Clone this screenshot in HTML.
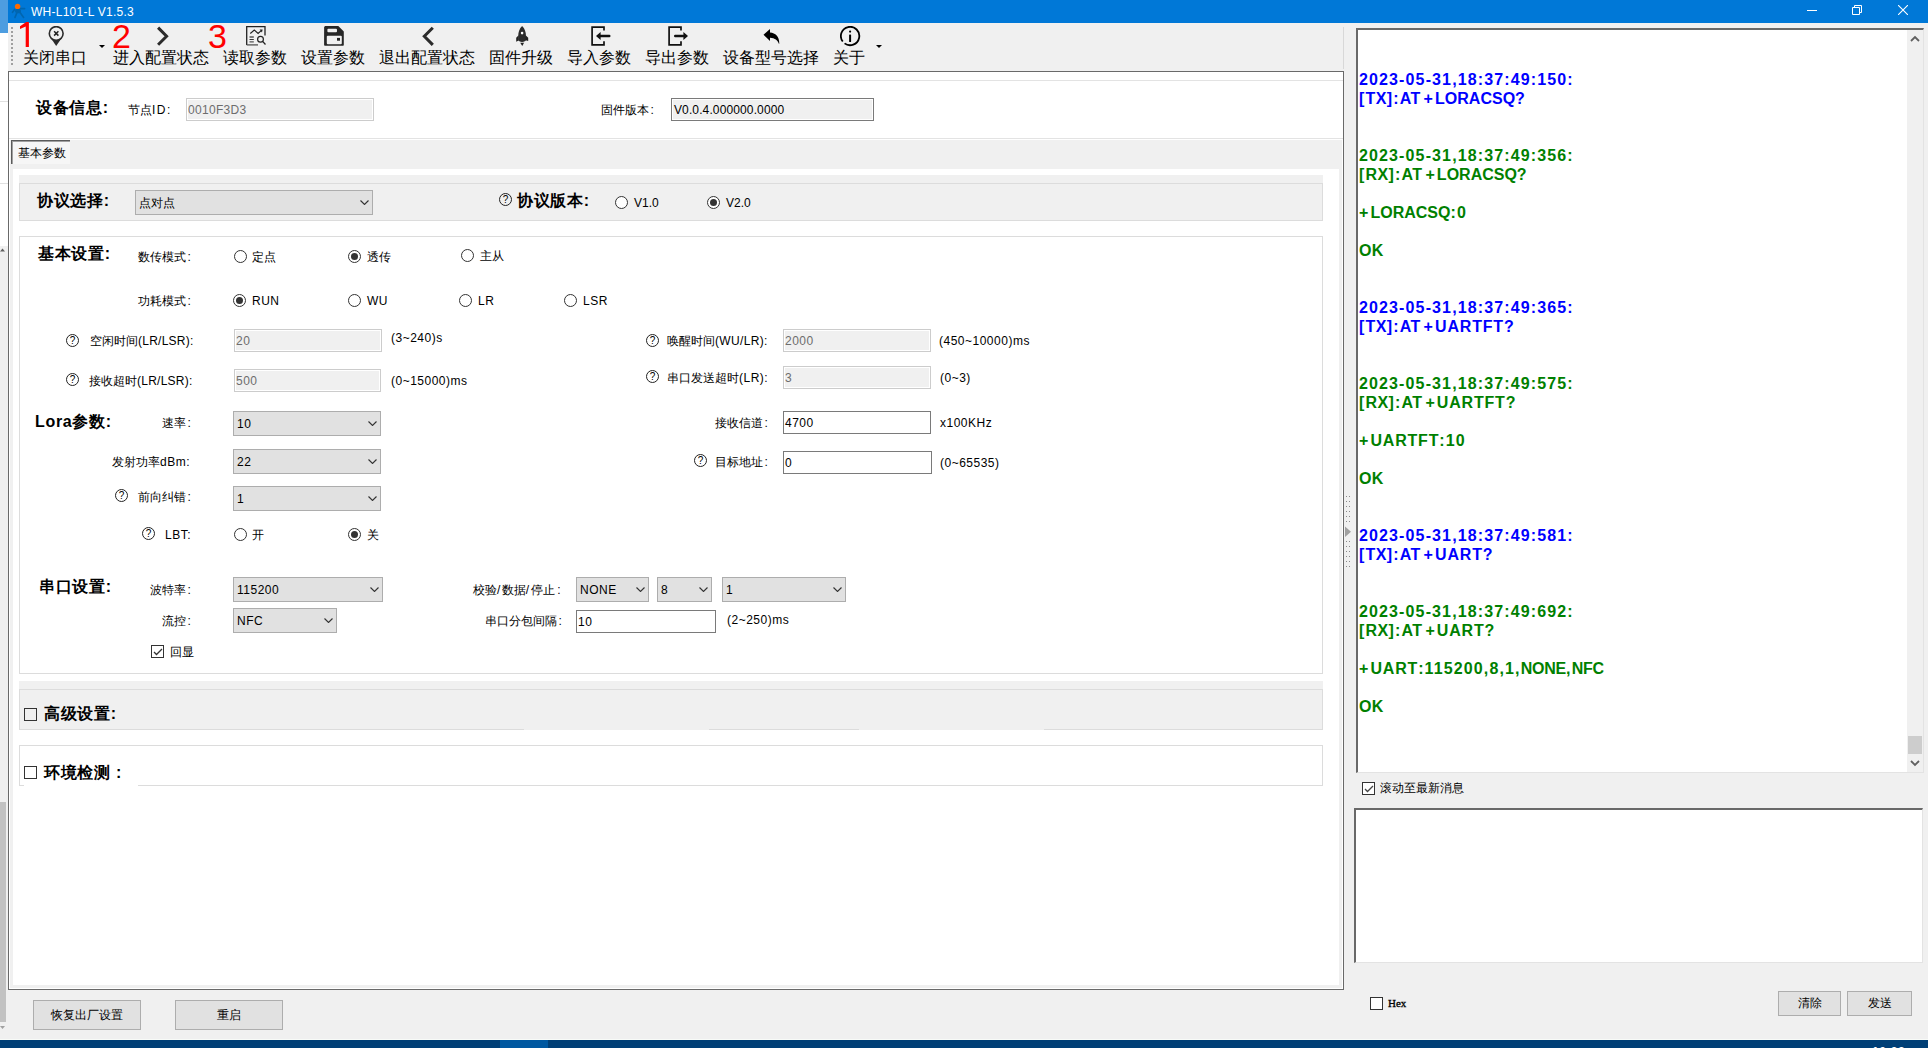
<!DOCTYPE html>
<html><head><meta charset="utf-8">
<style>
*{box-sizing:border-box;margin:0;padding:0}
html,body{width:1928px;height:1048px;overflow:hidden;background:#f0f0f0;font-family:"Liberation Sans",sans-serif;color:#000}
.a{position:absolute}
.t{position:absolute;white-space:nowrap;font-size:12px;line-height:14px}
.tb{position:absolute;white-space:nowrap;font-size:16px;line-height:18px}
.b16{position:absolute;white-space:nowrap;font-size:16px;line-height:18px;font-weight:bold;letter-spacing:.7px}
.rd{position:absolute;width:13px;height:13px;border:1px solid #333;border-radius:50%;background:#fff}
.rd.on::after{content:"";position:absolute;left:2px;top:2px;width:7px;height:7px;border-radius:50%;background:#333}
.q{position:absolute;width:13px;height:13px;border:1px solid #222;border-radius:50%;font-size:10px;line-height:11px;text-align:center;font-weight:normal}
.sel{position:absolute;border:1px solid #adadad;background:#e1e1e1;font-size:12px;line-height:14px}
.sel span{position:absolute;left:3px;top:5px}
.sel svg{position:absolute;right:3px;top:9px}
.inp{position:absolute;border:1px solid #7a7a7a;background:#fff;font-size:12px}
.inp.dis{border-color:#ccc;background:#f0f0f0;color:#6d6d6d;box-shadow:inset 0 0 0 1px #fff}
.inp.ro{border-color:#7a7a7a;background:#f0f0f0;color:#000;box-shadow:inset 0 0 0 1px #fff}
.inp span{position:absolute;left:1px;top:4px;line-height:14px}
.btn{position:absolute;border:1px solid #adadad;background:#e1e1e1;font-size:12px;text-align:center}
.cb{position:absolute;width:13px;height:13px;border:1px solid #333;background:#fff}
.log{position:absolute;left:1359px;font-size:16px;line-height:19px;font-weight:bold;white-space:pre;font-family:"Liberation Sans",sans-serif;letter-spacing:1.13px}
.l{letter-spacing:.5px}.c{margin-left:1.5px}
.lt{letter-spacing:.4px}
.bl{color:#0000ff}.gr{color:#008000}
</style></head><body>
<!-- desktop strip -->
<div class="a" style="left:0;top:0;width:8px;height:33px;background:#4d9de0"></div>
<div class="a" style="left:0;top:33px;width:8px;height:213px;background:#fff"></div>
<div class="a" style="left:0;top:101px;width:8px;height:1px;background:#e0e0e0"></div>
<div class="a" style="left:0;top:183px;width:8px;height:1px;background:#e0e0e0"></div>
<div class="a" style="left:0;top:246px;width:8px;height:794px;background:#f0f0f0"></div>
<div class="a" style="left:0;top:802px;width:6px;height:220px;background:#c2c2c2"></div>

<svg class="a" style="left:0;top:247px" width="5" height="5"><path d="M0 4.5L2.5 1.5L5 4.5z" fill="#606060"/></svg>
<svg class="a" style="left:0;top:1025px" width="5" height="5"><path d="M0 1L2.5 4L5 1z" fill="#a0a0a0"/></svg>
<!-- title bar -->
<div class="a" style="left:8px;top:0;width:1920px;height:23px;background:#0078d7"></div>
<svg class="a" style="left:0;top:0" width="30" height="22" viewBox="0 0 30 22"><path d="M14.6 9.4L12.5 12.3M19.5 8.6H24.6M17.8 10.5L15 17.4M18.6 10.5L23.6 17.4" stroke="#0066b0" stroke-width="1.7" stroke-linecap="round" fill="none"/><ellipse cx="18" cy="11" rx="3" ry="2.3" fill="#0066b0"/><circle cx="17.6" cy="6.4" r="2.7" fill="#ff6a00"/></svg>
<div class="t" style="left:31px;top:5px;color:#fff;font-size:12px;letter-spacing:.25px">WH-L101-L V1.5.3</div>
<div class="a" style="left:1807px;top:10px;width:10px;height:1px;background:#fff"></div>
<svg class="a" style="left:1852px;top:5px" width="10" height="10" viewBox="0 0 10 10"><path d="M0.5 2.5h7v7h-7z M2.5 2.5v-2h7v7h-2" stroke="#fff" fill="none"/></svg>
<svg class="a" style="left:1898px;top:5px" width="10" height="10" viewBox="0 0 10 10"><path d="M0 0L10 10M10 0L0 10" stroke="#fff" stroke-width="1.1" fill="none"/></svg>


<!-- toolbar -->
<div class="a" style="left:1343px;top:27px;width:1px;height:42px;background:#d8d8d8"></div>
<svg class="a" style="left:11px;top:27px" width="3" height="40" viewBox="0 0 3 40">
<g fill="#a0a0a0"><rect x="0" y="0" width="2" height="2"/><rect x="0" y="4" width="2" height="2"/><rect x="0" y="8" width="2" height="2"/><rect x="0" y="12" width="2" height="2"/><rect x="0" y="16" width="2" height="2"/><rect x="0" y="20" width="2" height="2"/><rect x="0" y="24" width="2" height="2"/><rect x="0" y="28" width="2" height="2"/><rect x="0" y="32" width="2" height="2"/><rect x="0" y="36" width="2" height="2"/></g></svg>
<svg class="a" style="left:0;top:0" width="40" height="50"><path d="M28.9 22.1V46.9H25.7V26.6L20 29.1V26.2L26.3 22.1Z" fill="#ff0000"/></svg>
<div class="a" style="left:112px;top:17px;font-size:34px;line-height:38px;color:#ff0000">2</div>
<div class="a" style="left:208px;top:17px;font-size:34px;line-height:38px;color:#ff0000">3</div>
<div class="tb" style="left:23px;top:49px">关闭串口</div>
<div class="tb" style="left:113px;top:49px">进入配置状态</div>
<div class="tb" style="left:223px;top:49px">读取参数</div>
<div class="tb" style="left:301px;top:49px">设置参数</div>
<div class="tb" style="left:379px;top:49px">退出配置状态</div>
<div class="tb" style="left:489px;top:49px">固件升级</div>
<div class="tb" style="left:567px;top:49px">导入参数</div>
<div class="tb" style="left:645px;top:49px">导出参数</div>
<div class="tb" style="left:723px;top:49px">设备型号选择</div>
<div class="tb" style="left:833px;top:49px">关于</div>
<svg class="a" style="left:99px;top:45px" width="6" height="4"><path d="M0 0h6l-3 3z" fill="#000"/></svg>
<svg class="a" style="left:876px;top:45px" width="6" height="4"><path d="M0 0h6l-3 3z" fill="#000"/></svg>
<!-- icon 1 pin x -->
<svg class="a" style="left:48px;top:26px" width="17" height="21" viewBox="0 0 17 21"><path d="M1.9 10.8L8.2 19.9L14.5 10.8Z" fill="#2b2b2b"/><circle cx="8.2" cy="7.5" r="6.9" fill="#f0f0f0" stroke="#2b2b2b" stroke-width="1.6"/><path d="M6.1 5.3l4.3 4.3M10.4 5.3l-4.3 4.3" stroke="#222" stroke-width="1.5"/></svg>
<!-- icon 2 > -->
<svg class="a" style="left:150px;top:22px" width="30" height="28" viewBox="0 0 30 28"><path d="M8.1 5.6L16.6 14.2L8.1 22.8" fill="none" stroke="#2b2b2b" stroke-width="3"/></svg>
<!-- icon 3 read -->
<svg class="a" style="left:240px;top:22px" width="30" height="28" viewBox="0 0 30 28"><path d="M6.7 22.9V4.6H25V13.4" fill="none" stroke="#222" stroke-width="1.3"/><path d="M6.7 22.9H18" stroke="#555" stroke-width="1.3"/><path d="M10.3 11.5L14.3 8.1L18.1 11.5L21.5 8.4" fill="none" stroke="#222" stroke-width="1.1"/><path d="M19.6 7.6H22.6L22 10.4Z" fill="#222"/><path d="M9.5 15H13.8M9.5 19.8H13.8" stroke="#555" stroke-width="1.3"/><path d="M9.5 17.5H13.8" stroke="#222" stroke-width="0.9"/><circle cx="20.5" cy="17.3" r="2.9" fill="none" stroke="#222" stroke-width="1.2"/><path d="M22.6 19.4L25.5 22.5" stroke="#222" stroke-width="1.3"/></svg>
<!-- icon 4 save -->
<svg class="a" style="left:318px;top:22px" width="30" height="28" viewBox="0 0 30 28"><path d="M7.2 4H20.3L25.8 9.5V22.9Q25.8 23.7 25 23.7H6.9Q6.1 23.7 6.1 22.9V5.1Z" fill="#262626"/><rect x="9.4" y="6.8" width="9.6" height="3.4" rx="1" fill="#f0f0f0"/><rect x="8.8" y="13.8" width="15" height="8.4" rx="1" fill="#f0f0f0"/><rect x="19" y="15.9" width="3" height="2.8" fill="#222"/></svg>
<!-- icon 5 < -->
<svg class="a" style="left:415px;top:22px" width="30" height="28" viewBox="0 0 30 28"><path d="M17.8 5.7L9.3 14.3L17.8 22.9" fill="none" stroke="#2b2b2b" stroke-width="3"/></svg>
<!-- icon 6 rocket -->
<svg class="a" style="left:505px;top:22px" width="30" height="28" viewBox="0 0 30 28"><path d="M17.1 4C14.5 6.5 13.2 10 13.2 14.5V17.8C13.2 19.2 15 19.9 17.1 19.9C19.2 19.9 21 19.2 21 17.8V14.5C21 10 19.7 6.5 17.1 4Z" fill="#2b2b2b"/><path d="M13.6 13.2L11.2 15.8V19.8L13.6 18.6ZM20.6 13.2L23.2 15.8V19L20.6 18.3Z" fill="#222"/><circle cx="17.1" cy="11.1" r="1.3" fill="#fff"/><path d="M15.2 20.8H19.1L17.3 24.1Z" fill="#222"/></svg>
<!-- icon 7 import -->
<svg class="a" style="left:591px;top:26px" width="20" height="21" viewBox="0 0 20 21"><path d="M13 4.6V1.1H1.1v17.7H13V15.2" fill="none" stroke="#111" stroke-width="1.7"/><path d="M18.3 10H8" stroke="#111" stroke-width="2.4" stroke-linecap="round"/><path d="M5 10l4.6-4v8z" fill="#111"/></svg>
<!-- icon 8 export -->
<svg class="a" style="left:668px;top:26px" width="21" height="21" viewBox="0 0 21 21"><path d="M13 4.6V1.1H1.1v17.7H13V15.2" fill="none" stroke="#111" stroke-width="1.7"/><path d="M7.2 10H15" stroke="#111" stroke-width="2.4" stroke-linecap="round"/><path d="M20 10l-4.6-4v8z" fill="#111"/></svg>
<!-- icon 9 reply -->
<svg class="a" style="left:763px;top:28px" width="18" height="18" viewBox="0 0 18 18"><path d="M0.5 6.8L7 1V4.6C12.5 5 16.3 8.5 16.3 15.5L16 16C14.8 12.3 12 10.2 7 9.8V12.9z" fill="#000"/></svg>
<!-- icon 10 info -->
<svg class="a" style="left:840px;top:26px" width="21" height="21" viewBox="0 0 21 21"><path d="M2.75 15.54A9.2 9.2 0 1 1 4.56 17.35" fill="none" stroke="#000" stroke-width="1.8"/><rect x="9.1" y="8.4" width="2" height="7.6" rx="0.6" fill="#000"/><circle cx="10.1" cy="5.6" r="1.1" fill="#000"/></svg>

<!-- left content panel -->
<div class="a" style="left:8px;top:71px;width:1336px;height:919px;border:1px solid #696969;background:#fff"></div>

<div class="a" style="left:9px;top:80px;width:1334px;height:1px;background:#e3e3e3"></div>
<div class="b16" style="left:36px;top:99px">设备信息:</div>
<div class="t" style="left:128px;top:103px;">节点<span class="l" style="letter-spacing:1.5px">ID:</span></div>
<div class="inp dis" style="left:186px;top:98px;width:188px;height:23px"><span class="l" style="letter-spacing:.3px">0010F3D3</span></div>
<div class="t" style="left:601px;top:103px;">固件版本<span class="c">:</span></div>
<div class="inp ro" style="left:671px;top:98px;width:203px;height:23px"><span class="l" style="letter-spacing:.12px;left:2px">V0.0.4.000000.0000</span></div>
<div class="a" style="left:9px;top:138px;width:1334px;height:1px;background:#e3e3e3"></div>
<div class="a" style="left:10px;top:140px;width:1332px;height:29px;background:#f0f0f0"></div>
<div class="a" style="left:11px;top:140px;width:59px;height:24px;border-top:1px solid #5a5a5a;border-left:1px solid #5a5a5a;background:#f6f6f6;box-shadow:inset 1px 1px 0 #a0a0a0"></div>
<div class="t" style="left:18px;top:146px;">基本参数</div>
<div class="a" style="left:10px;top:168px;width:3px;height:820px;background:#f0f0f0"></div>
<div class="a" style="left:1339px;top:168px;width:3px;height:820px;background:#f0f0f0"></div>
<div class="a" style="left:10px;top:985px;width:1332px;height:3px;background:#f0f0f0"></div>
<div class="a" style="left:19px;top:175px;width:1304px;height:46px;background:#f0f0f0"></div>
<div class="a" style="left:19px;top:183px;width:1304px;height:38px;border:1px solid #dcdcdc;border-right:1px solid #dcdcdc"></div>
<div class="b16" style="left:37px;top:192px">协议选择:</div>
<div class="sel" style="left:135px;top:190px;width:238px;height:25px"><span>点对点</span><svg width="9" height="5" viewBox="0 0 9 5"><path d="M0.5 0.5l4 4 4-4" fill="none" stroke="#333" stroke-width="1.1"/></svg></div>
<div class="q" style="left:499px;top:193px">?</div>
<div class="b16" style="left:517px;top:192px">协议版本:</div>
<div class="rd" style="left:615px;top:196px"></div>
<div class="t" style="left:634px;top:196px;"><span>V1.0</span></div>
<div class="rd on" style="left:707px;top:196px"></div>
<div class="t" style="left:726px;top:196px;"><span>V2.0</span></div>
<div class="a" style="left:19px;top:236px;width:1304px;height:438px;border:1px solid #dcdcdc"></div>
<div class="b16" style="left:38px;top:245px">基本设置:</div>
<div class="t" style="left:138px;top:250px;">数传模式<span class="c">:</span></div>
<div class="rd" style="left:234px;top:250px"></div>
<div class="t" style="left:252px;top:250px;">定点</div>
<div class="rd on" style="left:348px;top:250px"></div>
<div class="t" style="left:367px;top:250px;">透传</div>
<div class="rd" style="left:461px;top:249px"></div>
<div class="t" style="left:480px;top:249px;">主从</div>
<div class="t" style="left:138px;top:294px;">功耗模式<span class="c">:</span></div>
<div class="rd on" style="left:233px;top:294px"></div>
<div class="t" style="left:252px;top:294px;"><span class="l">RUN</span></div>
<div class="rd" style="left:348px;top:294px"></div>
<div class="t" style="left:367px;top:294px;"><span class="l">WU</span></div>
<div class="rd" style="left:459px;top:294px"></div>
<div class="t" style="left:478px;top:294px;"><span class="l">LR</span></div>
<div class="rd" style="left:564px;top:294px"></div>
<div class="t" style="left:583px;top:294px;"><span class="l">LSR</span></div>
<div class="q" style="left:66px;top:334px">?</div>
<div class="t" style="left:90px;top:334px;">空闲时间<span class="l" style="letter-spacing:.25px">(LR/LSR):</span></div>
<div class="inp dis" style="left:234px;top:329px;width:148px;height:23px"><span class="l">20</span></div>
<div class="t" style="left:391px;top:331px;"><span class="l">(3~240)s</span></div>
<div class="q" style="left:646px;top:334px">?</div>
<div class="t" style="left:667px;top:334px;">唤醒时间<span class="l" style="letter-spacing:.35px">(WU/LR):</span></div>
<div class="inp dis" style="left:783px;top:329px;width:148px;height:23px"><span class="l">2000</span></div>
<div class="t" style="left:939px;top:334px;"><span class="l">(450~10000)ms</span></div>
<div class="q" style="left:66px;top:373px">?</div>
<div class="t" style="left:89px;top:374px;">接收超时<span class="l" style="letter-spacing:.25px">(LR/LSR):</span></div>
<div class="inp dis" style="left:234px;top:369px;width:147px;height:23px"><span class="l">500</span></div>
<div class="t" style="left:391px;top:374px;"><span class="l">(0~15000)ms</span></div>
<div class="q" style="left:646px;top:370px">?</div>
<div class="t" style="left:667px;top:371px;">串口发送超时<span class="l">(LR):</span></div>
<div class="inp dis" style="left:783px;top:366px;width:148px;height:23px"><span class="l">3</span></div>
<div class="t" style="left:940px;top:371px;"><span class="l">(0~3)</span></div>
<div class="b16" style="left:35px;top:413px">Lora参数:</div>
<div class="t" style="left:162px;top:416px;">速率<span class="c">:</span></div>
<div class="sel" style="left:233px;top:411px;width:148px;height:25px"><span class="l">10</span><svg width="9" height="5" viewBox="0 0 9 5"><path d="M0.5 0.5l4 4 4-4" fill="none" stroke="#333" stroke-width="1.1"/></svg></div>
<div class="t" style="left:715px;top:416px;">接收信道<span class="c">:</span></div>
<div class="inp" style="left:783px;top:411px;width:148px;height:23px"><span class="l">4700</span></div>
<div class="t" style="left:940px;top:416px;"><span class="l">x100KHz</span></div>
<div class="t" style="left:112px;top:455px;">发射功率<span class="l">dBm:</span></div>
<div class="sel" style="left:233px;top:449px;width:148px;height:25px"><span class="l">22</span><svg width="9" height="5" viewBox="0 0 9 5"><path d="M0.5 0.5l4 4 4-4" fill="none" stroke="#333" stroke-width="1.1"/></svg></div>
<div class="q" style="left:694px;top:454px">?</div>
<div class="t" style="left:715px;top:455px;">目标地址<span class="c">:</span></div>
<div class="inp" style="left:783px;top:451px;width:149px;height:23px"><span class="l">0</span></div>
<div class="t" style="left:940px;top:456px;"><span class="l">(0~65535)</span></div>
<div class="q" style="left:115px;top:489px">?</div>
<div class="t" style="left:138px;top:490px;">前向纠错<span class="c">:</span></div>
<div class="sel" style="left:233px;top:486px;width:148px;height:25px"><span class="l">1</span><svg width="9" height="5" viewBox="0 0 9 5"><path d="M0.5 0.5l4 4 4-4" fill="none" stroke="#333" stroke-width="1.1"/></svg></div>
<div class="q" style="left:142px;top:527px">?</div>
<div class="t" style="left:165px;top:528px;"><span class="l">LBT:</span></div>
<div class="rd" style="left:234px;top:528px"></div>
<div class="t" style="left:252px;top:528px;">开</div>
<div class="rd on" style="left:348px;top:528px"></div>
<div class="t" style="left:367px;top:528px;">关</div>
<div class="b16" style="left:39px;top:578px">串口设置:</div>
<div class="t" style="left:150px;top:583px;">波特率<span class="c">:</span></div>
<div class="sel" style="left:233px;top:577px;width:150px;height:25px"><span class="l">115200</span><svg width="9" height="5" viewBox="0 0 9 5"><path d="M0.5 0.5l4 4 4-4" fill="none" stroke="#333" stroke-width="1.1"/></svg></div>
<div class="t" style="left:473px;top:583px;">校验<span class="l" style="letter-spacing:1.5px">/</span>数据<span class="l" style="letter-spacing:1.5px">/</span>停止<span class="c" style="margin-left:2.5px">:</span></div>
<div class="sel" style="left:576px;top:577px;width:73px;height:25px"><span class="l">NONE</span><svg width="9" height="5" viewBox="0 0 9 5"><path d="M0.5 0.5l4 4 4-4" fill="none" stroke="#333" stroke-width="1.1"/></svg></div>
<div class="sel" style="left:657px;top:577px;width:55px;height:25px"><span class="l">8</span><svg width="9" height="5" viewBox="0 0 9 5"><path d="M0.5 0.5l4 4 4-4" fill="none" stroke="#333" stroke-width="1.1"/></svg></div>
<div class="sel" style="left:722px;top:577px;width:124px;height:25px"><span class="l">1</span><svg width="9" height="5" viewBox="0 0 9 5"><path d="M0.5 0.5l4 4 4-4" fill="none" stroke="#333" stroke-width="1.1"/></svg></div>
<div class="t" style="left:162px;top:614px;">流控<span class="c">:</span></div>
<div class="sel" style="left:233px;top:608px;width:104px;height:25px"><span class="l">NFC</span><svg width="9" height="5" viewBox="0 0 9 5"><path d="M0.5 0.5l4 4 4-4" fill="none" stroke="#333" stroke-width="1.1"/></svg></div>
<div class="t" style="left:485px;top:614px;">串口分包间隔<span class="c">:</span></div>
<div class="inp" style="left:576px;top:610px;width:140px;height:23px"><span class="l">10</span></div>
<div class="t" style="left:727px;top:613px;"><span class="l">(2~250)ms</span></div>
<div class="cb" style="left:151px;top:645px"></div>
<svg class="a" style="left:153px;top:648px" width="10" height="8"><path d="M1 4l2.5 2.5L9 1" fill="none" stroke="#333" stroke-width="1.3"/></svg>
<div class="t" style="left:170px;top:645px;">回显</div>
<div class="a" style="left:19px;top:681px;width:1304px;height:49px;background:#f0f0f0"></div>
<div class="a" style="left:19px;top:689px;width:1304px;height:41px;border:1px solid #dcdcdc"></div>
<div class="a" style="left:24px;top:708px;width:13px;height:13px;border:1px solid #333;background:transparent"></div>
<div class="b16" style="left:44px;top:705px">高级设置:</div>
<div class="a" style="left:524px;top:729px;width:185px;height:1px;background:#f0f0f0"></div>
<div class="a" style="left:859px;top:729px;width:185px;height:1px;background:#f0f0f0"></div>
<div class="a" style="left:19px;top:745px;width:1304px;height:41px;border:1px solid #dcdcdc"></div>
<div class="a" style="left:24px;top:785px;width:114px;height:1px;background:#fff"></div>
<div class="a" style="left:24px;top:766px;width:13px;height:13px;border:1px solid #333;background:#fff"></div>
<div class="b16" style="left:44px;top:764px">环境检测 :</div>
<div class="btn" style="left:33px;top:1000px;width:108px;height:30px;line-height:28px">恢复出厂设置</div>
<div class="btn" style="left:175px;top:1000px;width:108px;height:30px;line-height:28px">重启</div>
<!-- right panel -->
<div class="a" style="left:1356px;top:28px;width:568px;height:745px;border-top:2px solid #696969;border-left:2px solid #696969;border-right:1px solid #e3e3e3;border-bottom:1px solid #e3e3e3;background:#fff"></div>
<div class="a" style="left:1354px;top:808px;width:569px;height:155px;border-top:2px solid #696969;border-left:2px solid #696969;border-right:1px solid #e3e3e3;border-bottom:1px solid #e3e3e3;background:#fff"></div>

<div class="log bl" style="top:70px">2023-05-31,18:37:49:150:</div>
<div class="log bl" style="top:89px">[<span class="lt">TX</span>]:<span class="lt">AT</span><span style="margin-left:3px;margin-right:1px">+</span><span class="lt" style="letter-spacing:0">LORACSQ</span>?</div>
<div class="log gr" style="top:146px">2023-05-31,18:37:49:356:</div>
<div class="log gr" style="top:165px">[<span class="lt">RX</span>]:<span class="lt">AT</span><span style="margin-left:3px;margin-right:1px">+</span><span class="lt" style="letter-spacing:0">LORACSQ</span>?</div>
<div class="log gr" style="top:203px"><span style="margin-right:1px">+</span><span class="lt" style="letter-spacing:0">LORACSQ</span>:0</div>
<div class="log gr" style="top:241px"><span class="lt">OK</span></div>
<div class="log bl" style="top:298px">2023-05-31,18:37:49:365:</div>
<div class="log bl" style="top:317px">[<span class="lt">TX</span>]:<span class="lt">AT</span><span style="margin-left:3px;margin-right:1px">+</span><span class="lt" style="letter-spacing:.8px">UARTFT</span>?</div>
<div class="log gr" style="top:374px">2023-05-31,18:37:49:575:</div>
<div class="log gr" style="top:393px">[<span class="lt">RX</span>]:<span class="lt">AT</span><span style="margin-left:3px;margin-right:1px">+</span><span class="lt" style="letter-spacing:.8px">UARTFT</span>?</div>
<div class="log gr" style="top:431px"><span style="margin-right:1px">+</span><span class="lt" style="letter-spacing:.8px">UARTFT</span>:10</div>
<div class="log gr" style="top:469px"><span class="lt">OK</span></div>
<div class="log bl" style="top:526px">2023-05-31,18:37:49:581:</div>
<div class="log bl" style="top:545px">[<span class="lt">TX</span>]:<span class="lt">AT</span><span style="margin-left:3px;margin-right:1px">+</span><span class="lt" style="letter-spacing:.8px">UART</span>?</div>
<div class="log gr" style="top:602px">2023-05-31,18:37:49:692:</div>
<div class="log gr" style="top:621px">[<span class="lt">RX</span>]:<span class="lt">AT</span><span style="margin-left:3px;margin-right:1px">+</span><span class="lt" style="letter-spacing:.8px">UART</span>?</div>
<div class="log gr" style="top:659px"><span style="margin-right:1px">+</span><span class="lt" style="letter-spacing:.8px">UART</span>:115200,8,1,<span class="lt" style="letter-spacing:-.2px">NONE</span>,<span class="lt" style="letter-spacing:-.2px">NFC</span></div>
<div class="log gr" style="top:697px"><span class="lt">OK</span></div>
<!-- log scrollbar -->
<div class="a" style="left:1907px;top:30px;width:16px;height:742px;background:#f0f0f0"></div>
<svg class="a" style="left:1910px;top:35px" width="10" height="8"><path d="M1 6l4-4 4 4" fill="none" stroke="#606060" stroke-width="1.8"/></svg>
<svg class="a" style="left:1910px;top:759px" width="10" height="8"><path d="M1 2l4 4 4-4" fill="none" stroke="#606060" stroke-width="1.8"/></svg>
<div class="a" style="left:1908px;top:736px;width:14px;height:18px;background:#cdcdcd"></div>
<!-- scroll to latest -->
<div class="cb" style="left:1362px;top:782px"></div>
<svg class="a" style="left:1364px;top:785px" width="10" height="8"><path d="M1 4l2.5 2.5L9 1" fill="none" stroke="#444" stroke-width="1.3"/></svg>
<div class="t" style="left:1380px;top:781px">滚动至最新消息</div>
<!-- hex -->
<div class="cb" style="left:1370px;top:997px"></div>
<div class="t" style="left:1388px;top:995.5px;font-family:'Liberation Serif',serif;font-size:11px;font-weight:normal;-webkit-text-stroke:0.3px #000">Hex</div>
<div class="btn" style="left:1778px;top:991px;width:63px;height:25px;line-height:23px">清除</div>
<div class="btn" style="left:1847px;top:991px;width:65px;height:25px;line-height:23px">发送</div>
<!-- splitter grip -->
<svg class="a" style="left:1345px;top:496px" width="8" height="72"><g fill="#8a8a8a"><rect x="1" y="0" width="1" height="1"/><rect x="4" y="0" width="1" height="1"/><rect x="1" y="5" width="1" height="1"/><rect x="4" y="5" width="1" height="1"/><rect x="1" y="10" width="1" height="1"/><rect x="4" y="10" width="1" height="1"/><rect x="1" y="15" width="1" height="1"/><rect x="4" y="15" width="1" height="1"/><rect x="1" y="20" width="1" height="1"/><rect x="4" y="20" width="1" height="1"/><rect x="1" y="25" width="1" height="1"/><rect x="4" y="25" width="1" height="1"/><rect x="1" y="45" width="1" height="1"/><rect x="4" y="45" width="1" height="1"/><rect x="1" y="50" width="1" height="1"/><rect x="4" y="50" width="1" height="1"/><rect x="1" y="55" width="1" height="1"/><rect x="4" y="55" width="1" height="1"/><rect x="1" y="60" width="1" height="1"/><rect x="4" y="60" width="1" height="1"/><rect x="1" y="65" width="1" height="1"/><rect x="4" y="65" width="1" height="1"/><rect x="1" y="70" width="1" height="1"/><rect x="4" y="70" width="1" height="1"/></g><path d="M0 30.5v10.5l6-5.25z" fill="#a0a0a0"/></svg>
<!-- taskbar -->
<div class="a" style="left:0;top:1040px;width:1928px;height:8px;overflow:hidden;z-index:2"><div class="t" style="left:1872px;top:4.5px;color:#fff;font-size:12px;font-weight:bold;letter-spacing:.5px">10:38</div></div>
<div class="a" style="left:0;top:1039px;width:1928px;height:1px;background:#f8fbf8"></div>
<div class="a" style="left:0;top:1040px;width:1928px;height:8px;background:#003f76"></div>
<div class="a" style="left:500px;top:1040px;width:48px;height:8px;background:#0058a0"></div>
</body></html>
